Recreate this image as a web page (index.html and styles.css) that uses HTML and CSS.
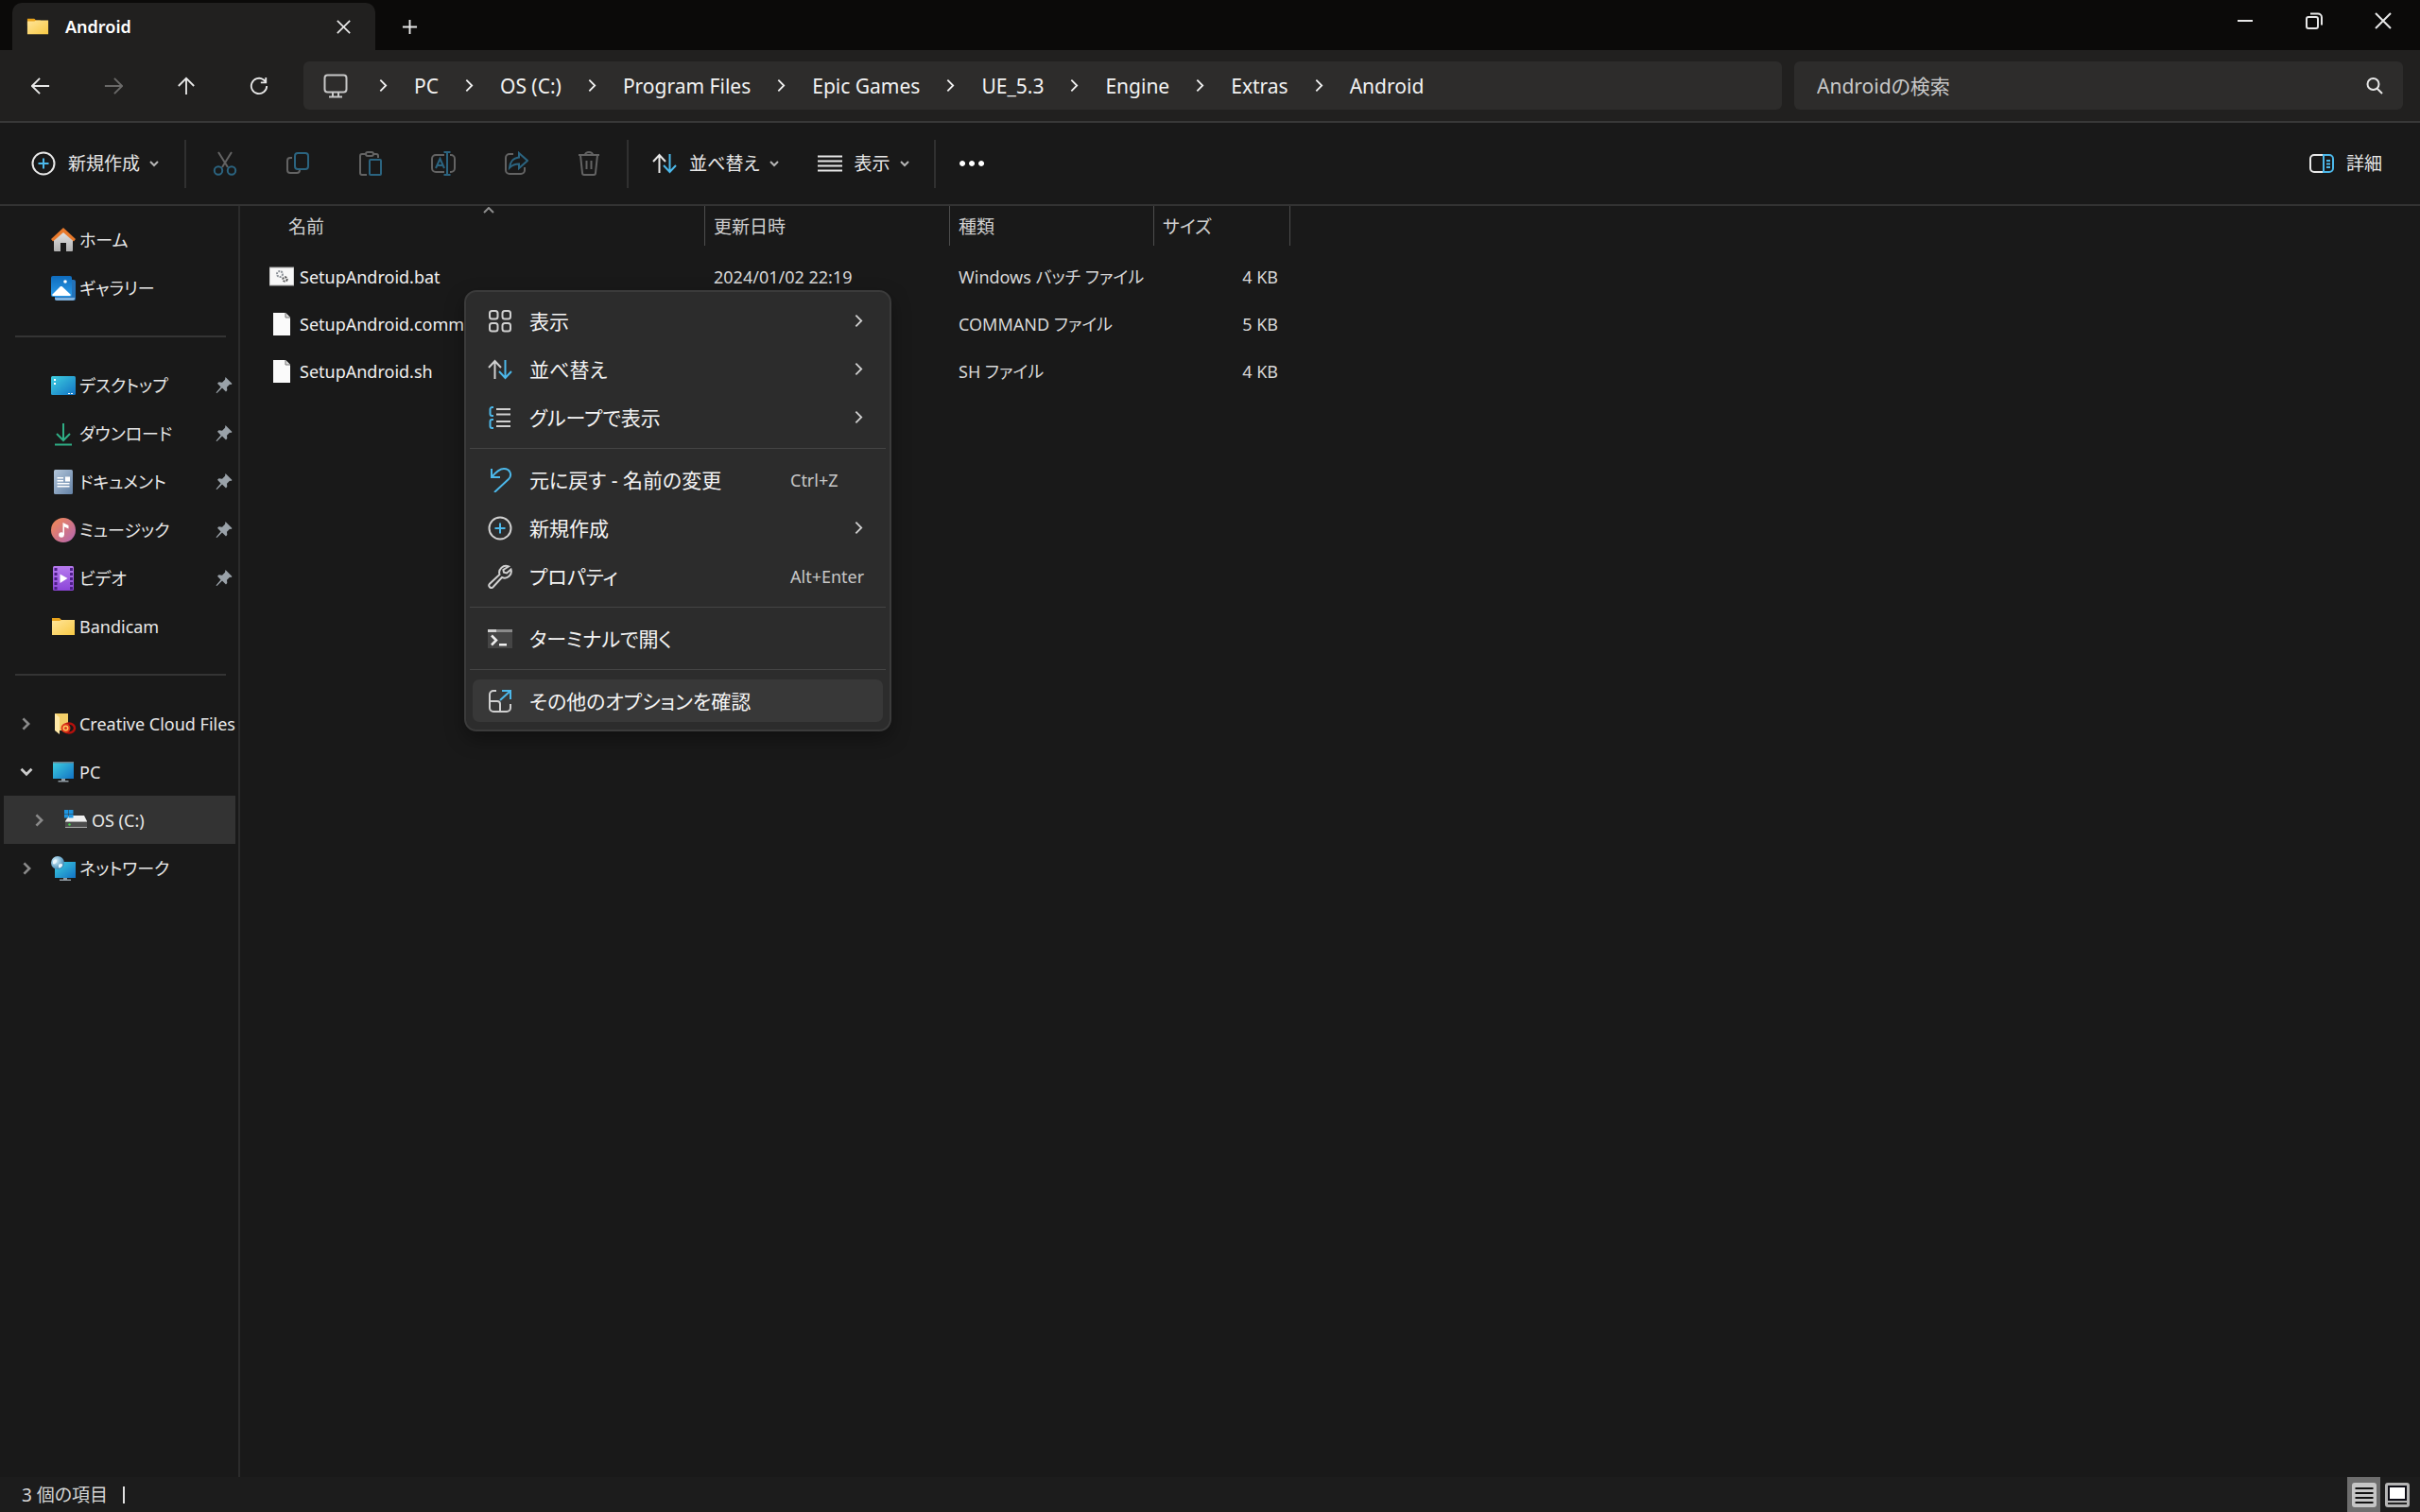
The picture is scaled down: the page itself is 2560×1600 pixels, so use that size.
FILE: index.html
```html
<!DOCTYPE html>
<html lang="ja">
<head>
  <meta charset="UTF-8">
  <meta name="viewport" content="width=device-width, initial-scale=1.0">
  <title>Android</title>
  <link rel="stylesheet" href="styles.css">
</head>
<body>
  <!-- shared icons -->
  <svg class="defs" aria-hidden="true">
    <defs>
      <linearGradient id="g-folder" x1="0" y1="0" x2="1" y2="1"><stop offset="0" stop-color="#ffe59a"/><stop offset="1" stop-color="#f8c944"/></linearGradient>
      <linearGradient id="g-blue" x1="0" y1="0" x2="1" y2="1"><stop offset="0" stop-color="#3fd0e0"/><stop offset="1" stop-color="#1272c4"/></linearGradient>
      <linearGradient id="g-pic" x1="0" y1="0" x2="0" y2="1"><stop offset="0" stop-color="#0f6cbd"/><stop offset="1" stop-color="#2a9ceb"/></linearGradient>
      <linearGradient id="g-doc" x1="0" y1="0" x2="1" y2="1"><stop offset="0" stop-color="#b3c6da"/><stop offset="1" stop-color="#6482a6"/></linearGradient>
      <linearGradient id="g-music" x1="0" y1="0" x2="1" y2="1"><stop offset="0" stop-color="#f58a50"/><stop offset="1" stop-color="#b264b4"/></linearGradient>
      <linearGradient id="g-video" x1="0" y1="0" x2="0" y2="1"><stop offset="0" stop-color="#b77bee"/><stop offset="1" stop-color="#8b45d8"/></linearGradient>
      <linearGradient id="g-home" x1="0" y1="0" x2="0" y2="1"><stop offset="0" stop-color="#e6e6e6"/><stop offset="1" stop-color="#b0b0b0"/></linearGradient>
      <radialGradient id="g-globe" cx=".35" cy=".35" r=".7"><stop offset="0" stop-color="#d8f1fb"/><stop offset="1" stop-color="#3c86b4"/></radialGradient>
    </defs>
    <symbol id="i-close" viewBox="0 0 18 18"><path d="M1 1l16 16M17 1L1 17"/></symbol>
    <symbol id="i-plus" viewBox="0 0 18 18"><path d="M9 1v16M1 9h16"/></symbol>
    <symbol id="i-min" viewBox="0 0 18 18"><path d="M1 9h16"/></symbol>
    <symbol id="i-restore" viewBox="0 0 18 18"><rect x="1" y="5" width="12" height="12" rx="2"/><path d="M5 1.500h8a4 4 0 0 1 4 4v8"/></symbol>
    <symbol id="i-back" viewBox="0 0 22 22"><path d="M21 11H2M10 2l-9 9 9 9"/></symbol>
    <symbol id="i-forward" viewBox="0 0 22 22"><path d="M1 11h19M12 2l9 9-9 9"/></symbol>
    <symbol id="i-up" viewBox="0 0 22 22"><path d="M11 21V2M2 11l9-9 9 9"/></symbol>
    <symbol id="i-refresh" viewBox="0 0 22 22"><path d="M20 11a9 9 0 1 1-4-7.500l3 2.500M19 1v6h-6"/></symbol>
    <symbol id="i-pc" viewBox="0 0 26 26"><rect x="1.500" y="1.500" width="23" height="18" rx="3"/><path d="M10 20v4M16 20v4M6 24.500h14"/></symbol>
    <symbol id="i-right" viewBox="0 0 10 16"><path d="M1.500 1.500L8 8l-6.500 6.500"/></symbol>
    <symbol id="i-down" viewBox="0 0 10 8"><path d="M1 2l4 4 4-4"/></symbol>
    <symbol id="i-caret" viewBox="0 0 12 7"><path d="M1 6l5-5 5 5"/></symbol>
    <symbol id="i-search" viewBox="0 0 18 18"><circle cx="7.500" cy="7" r="6"/><path d="M11.500 11.500L17 17"/></symbol>
    <symbol id="i-new" viewBox="0 0 26 26"><circle cx="13" cy="13" r="11.500"/><path class="accent" d="M13 7.500v11M7.500 13h11"/></symbol>
    <symbol id="i-cut" viewBox="0 0 26 26"><path d="M6 1l10 16M20 1L10 17"/><circle class="accent" cx="6" cy="20.500" r="4.200"/><circle class="accent" cx="20" cy="20.500" r="4.200"/></symbol>
    <symbol id="i-copy" viewBox="0 0 26 26"><path d="M7 7H5a3 3 0 0 0-3 3v10a3 3 0 0 0 3 3h7a3 3 0 0 0 3-3"/><rect class="accent" x="10" y="2" width="14" height="17" rx="3"/></symbol>
    <symbol id="i-paste" viewBox="0 0 26 26"><path d="M8 3H4a2 2 0 0 0-2 2v18a2 2 0 0 0 2 2h5M16 3h3a2 2 0 0 1 2 2v2"/><rect x="8" y="1" width="8" height="4" rx="2"/><rect class="accent" x="12" y="9" width="12" height="16" rx="1"/></symbol>
    <symbol id="i-rename" viewBox="0 0 26 26"><path d="M14 4H5a4 4 0 0 0-4 4v10a4 4 0 0 0 4 4h9M20 4h1a4 4 0 0 1 4 4v10a4 4 0 0 1-4 4h-1"/><path class="accent" d="M5 18L9.500 8 14 18M6.500 15h6M17 1v24M13.500 1h7M13.500 25h7"/></symbol>
    <symbol id="i-share" viewBox="0 0 26 26"><path d="M10 3H6a4 4 0 0 0-4 4v13a4 4 0 0 0 4 4h12a4 4 0 0 0 4-4v-3"/><path class="accent" d="M16 2l9 8-9 8v-4.500c-4 0-7 1-10 4 .5-6 4-10.500 10-11z"/></symbol>
    <symbol id="i-trash" viewBox="0 0 26 26"><path d="M2 4h22M4 4l2 19a2 2 0 0 0 2 2h10a2 2 0 0 0 2-2l2-19M9 4a4 3 0 0 1 8 0M10.500 10v9M15.500 10v9"/></symbol>
    <symbol id="i-sort" viewBox="0 0 26 20"><path d="M7.500 20V1M1 8l6.500-7L14 8"/><path class="accent" d="M18.500 0v19M12 12l6.500 7 6.500-7"/></symbol>
    <symbol id="i-view" viewBox="0 0 26 18"><path d="M0 1.500h26M0 6.500h26M0 11.500h26M0 16.500h26"/></symbol>
    <symbol id="i-more" viewBox="0 0 26 8"><path class="solid" d="M3 1a3 3 0 1 0 .1 0zM13 1a3 3 0 1 0 .1 0zM23 1a3 3 0 1 0 .1 0z"/></symbol>
    <symbol id="i-details" viewBox="0 0 26 20"><path d="M15 1H5a4 4 0 0 0-4 4v10a4 4 0 0 0 4 4h10"/><path class="accent" d="M15 1h6a4 4 0 0 1 4 4v10a4 4 0 0 1-4 4h-6zM18 7h4M18 10.500h4M18 14h4"/></symbol>
    <symbol id="i-grid" viewBox="0 0 26 26"><rect x="2" y="2" width="8.500" height="8.500" rx="2.500"/><rect x="15.500" y="2" width="8.500" height="8.500" rx="2.500"/><rect x="2" y="15" width="8.500" height="8.500" rx="2.500"/><rect x="15.500" y="15" width="8.500" height="8.500" rx="2.500"/></symbol>
    <symbol id="i-group" viewBox="0 0 26 26"><path d="M9 4h15M9 9.500h15M9 17h15M9 22h15"/><path class="accent" d="M6 2H4.500A2 2 0 0 0 2.500 4v5a2 2 0 0 0 2 2H6M6 15H4.500a2 2 0 0 0-2 2v5a2 2 0 0 0 2 2H6"/></symbol>
    <symbol id="i-undo" viewBox="0 0 26 26"><path class="accent" d="M4 1v9h9M4 10C9 4 13 1 17 1c7 0 9 7 5 11L7 26"/></symbol>
    <symbol id="i-wrench" viewBox="0 0 26 26"><path d="M22 2.500a7 7 0 0 0-9.500 8.500L1.800 21a2.500 2.500 0 0 0 3.500 3.500L15 14a7 7 0 0 0 9.500-8.500l-4.500 4-3-.8-.6-2.700z"/></symbol>
    <symbol id="i-more-options" viewBox="0 0 26 26"><path d="M9 2H6a4 4 0 0 0-4 4v14a4 4 0 0 0 4 4h14a4 4 0 0 0 4-4v-4M2 13h8a3 3 0 0 1 3 3v8"/><path class="accent" d="M13 12L24 2M15 2h9v9"/></symbol>
    <symbol id="i-pin" viewBox="0 0 18 18"><path class="solid" d="M10.500 0L17.500 7l-1 1-1.500-.3-3 3 .3 3.300-1.300 1.500-4-4L1.500 17 .5 16.500 5.500 10.500 2 6.800l1.500-1.500 3.500.4 3-3z"/></symbol>
    <symbol id="i-folder" viewBox="0 0 26 20"><path d="M1 1h8l2 2h5v6H1z" fill="#e8a31c" stroke="none"/><path d="M1 4h8l2-1h14v16H1z" fill="url(#g-folder)" stroke="none"/></symbol>
    <symbol id="i-file" viewBox="0 0 26 26"><path d="M4 1h13l5 5v19H4z" fill="#fafafa" stroke="none"/><path d="M17 1v5h5" fill="#ddd" stroke="#777" stroke-width="1"/></symbol>
    <symbol id="i-bat" viewBox="0 0 26 26"><path d="M0 3h26v19H0z" fill="#f7f7f7" stroke="#aaa" stroke-width="1"/><circle cx="11" cy="10" r="3" stroke="#8d9298" stroke-width="2" stroke-dasharray="2 1"/><circle cx="16.500" cy="15.500" r="2.200" stroke="#555" stroke-width="2" stroke-dasharray="2 1"/></symbol>
  </svg>

  <header class="titlebar">
    <div class="tab">
      <svg class="tab-folder"><use href="#i-folder"/></svg>
      <span class="tab-title">Android</span>
      <button class="icon-btn" aria-label="タブを閉じる"><svg class="ic-15"><use href="#i-close"/></svg></button>
    </div>
    <button class="icon-btn new-tab" aria-label="新しいタブ"><svg class="ic-17"><use href="#i-plus"/></svg></button>
    <div class="window-controls">
      <button class="icon-btn" aria-label="最小化"><svg class="ic-18"><use href="#i-min"/></svg></button>
      <button class="icon-btn" aria-label="元に戻す"><svg class="ic-18"><use href="#i-restore"/></svg></button>
      <button class="icon-btn" aria-label="閉じる"><svg class="ic-18"><use href="#i-close"/></svg></button>
    </div>
  </header>

  <div class="navbar">
    <div class="nav-buttons">
      <button class="icon-btn" aria-label="戻る"><svg class="ic-20"><use href="#i-back"/></svg></button>
      <button class="icon-btn" aria-label="進む" disabled><svg class="ic-20"><use href="#i-forward"/></svg></button>
      <button class="icon-btn" aria-label="上へ"><svg class="ic-20"><use href="#i-up"/></svg></button>
      <button class="icon-btn" aria-label="更新"><svg class="ic-20"><use href="#i-refresh"/></svg></button>
    </div>
    <nav class="address">
      <svg class="address-pc"><use href="#i-pc"/></svg>
      <svg class="chev"><use href="#i-right"/></svg>
      <a href="#">PC</a>
      <svg class="chev"><use href="#i-right"/></svg>
      <a href="#">OS (C:)</a>
      <svg class="chev"><use href="#i-right"/></svg>
      <a href="#">Program Files</a>
      <svg class="chev"><use href="#i-right"/></svg>
      <a href="#">Epic Games</a>
      <svg class="chev"><use href="#i-right"/></svg>
      <a href="#">UE_5.3</a>
      <svg class="chev"><use href="#i-right"/></svg>
      <a href="#">Engine</a>
      <svg class="chev"><use href="#i-right"/></svg>
      <a href="#">Extras</a>
      <svg class="chev"><use href="#i-right"/></svg>
      <a href="#">Android</a>
    </nav>
    <label class="search">
      <input type="text" placeholder="Androidの検索" aria-label="Androidの検索">
      <svg class="ic-18"><use href="#i-search"/></svg>
    </label>
  </div>

  <div class="toolbar">
    <button class="tool"><svg class="ic-26"><use href="#i-new"/></svg><span>新規作成</span><svg class="drop"><use href="#i-down"/></svg></button>
    <div class="tool-group">
      <button class="icon-btn" aria-label="切り取り" disabled><svg class="ic-26"><use href="#i-cut"/></svg></button>
      <button class="icon-btn" aria-label="コピー" disabled><svg class="ic-26"><use href="#i-copy"/></svg></button>
      <button class="icon-btn" aria-label="貼り付け" disabled><svg class="ic-26"><use href="#i-paste"/></svg></button>
      <button class="icon-btn" aria-label="名前の変更" disabled><svg class="ic-26"><use href="#i-rename"/></svg></button>
      <button class="icon-btn" aria-label="共有" disabled><svg class="ic-26"><use href="#i-share"/></svg></button>
      <button class="icon-btn" aria-label="削除" disabled><svg class="ic-26"><use href="#i-trash"/></svg></button>
    </div>
    <div class="tool-group views">
      <button class="tool"><svg class="ic-26"><use href="#i-sort"/></svg><span>並べ替え</span><svg class="drop"><use href="#i-down"/></svg></button>
      <button class="tool"><svg class="ic-26"><use href="#i-view"/></svg><span>表示</span><svg class="drop"><use href="#i-down"/></svg></button>
    </div>
    <button class="icon-btn more" aria-label="もっと見る"><svg class="ic-26"><use href="#i-more"/></svg></button>
    <button class="tool details"><svg class="ic-26"><use href="#i-details"/></svg><span>詳細</span></button>
  </div>

  <div class="body">
    <aside class="sidebar">
      <a class="item" href="#"><span class="twist"></span>
        <svg class="ic-26 art" viewBox="0 0 26 26"><path d="M3 12L13 3l10 9v12a1 1 0 0 1-1 1h-6v-9h-6v9H4a1 1 0 0 1-1-1z" fill="url(#g-home)"/><path d="M0 12L13 0l13 12-2 2.500L13 5 2 14.500z" fill="#e8792b"/></svg>
        <span class="name">ホーム</span></a>
      <a class="item" href="#"><span class="twist"></span>
        <svg class="ic-26 art" viewBox="0 0 26 26"><rect x="4" y="4" width="22" height="22" rx="2" fill="#2472b8"/><path d="M4 23h21v1a2 2 0 0 1-2 2H6a2 2 0 0 1-2-2z" fill="#7fb2de"/><rect width="22" height="22" rx="2" fill="url(#g-pic)"/><path d="M1 20l9-9 1.500 0L21 20a2 2 0 0 1-1 1H2a2 2 0 0 1-1-1z" fill="#fff"/><circle cx="15" cy="6" r="1.800" fill="#fff"/></svg>
        <span class="name">ギャラリー</span></a>
      <hr>
      <a class="item" href="#"><span class="twist"></span>
        <svg class="ic-26 art" viewBox="0 0 26 20"><rect width="26" height="20" rx="1.500" fill="url(#g-blue)"/><path d="M3 3h2v2H3zM3 7h2v2H3z" fill="#fff"/><path d="M18 18h2v1h-2zM21 18h2v1h-2z" fill="#fff"/></svg>
        <span class="name">デスクトップ</span><svg class="pin"><use href="#i-pin"/></svg></a>
      <a class="item" href="#"><span class="twist"></span>
        <svg class="ic-26 download" viewBox="0 0 26 26"><path d="M13 2v18M6 13l7 7 7-7M4 24.500h18"/></svg>
        <span class="name">ダウンロード</span><svg class="pin"><use href="#i-pin"/></svg></a>
      <a class="item" href="#"><span class="twist"></span>
        <svg class="ic-26 art" viewBox="0 0 26 26"><rect x="3" width="20" height="26" rx="1.500" fill="url(#g-doc)"/><path d="M6.500 8H13v1.600H6.500zM6.500 11H13v1.600H6.500zM15 7.500h5v5h-5zM6.500 14h13v1.600h-13zM6.500 17h13v1.600h-13z" fill="#fff"/></svg>
        <span class="name">ドキュメント</span><svg class="pin"><use href="#i-pin"/></svg></a>
      <a class="item" href="#"><span class="twist"></span>
        <svg class="ic-26 art" viewBox="0 0 26 26"><circle cx="13" cy="13" r="13" fill="url(#g-music)"/><circle cx="11" cy="18" r="2.800" fill="#fff"/><path d="M12.500 18V5l6 3v3.500l-4.500-2V18z" fill="#fff"/></svg>
        <span class="name">ミュージック</span><svg class="pin"><use href="#i-pin"/></svg></a>
      <a class="item" href="#"><span class="twist"></span>
        <svg class="ic-26 art" viewBox="0 0 26 26"><rect x="2" width="22" height="26" rx="1.500" fill="url(#g-video)"/><path d="M5 2v23M21.500 2v23" stroke="#4d1f87" stroke-width="3" stroke-dasharray="3 2"/><path d="M9.500 8.500l8 4.500-8 5z" fill="#fff"/></svg>
        <span class="name">ビデオ</span><svg class="pin"><use href="#i-pin"/></svg></a>
      <a class="item" href="#"><span class="twist"></span>
        <svg class="ic-26"><use href="#i-folder"/></svg>
        <span class="name">Bandicam</span></a>
      <hr>
      <a class="item" href="#"><span class="twist"><svg><use href="#i-right"/></svg></span>
        <svg class="ic-26 art" viewBox="0 0 26 26"><path d="M4 2h14v18H8z" fill="#f3cf69"/><path d="M4 2l5 4v18l-5-4z" fill="#ffe9a8"/><ellipse cx="19" cy="17.500" rx="6" ry="5" fill="none" stroke="#b3100c" stroke-width="2.500"/><circle cx="15.500" cy="17.500" r="4" fill="#ffc65c" stroke="#dd3a1c" stroke-width="2"/><circle cx="15.500" cy="17.500" r="1.500" fill="#dd3a1c"/></svg>
        <span class="name">Creative Cloud Files</span></a>
      <a class="item" href="#"><span class="twist open"><svg><use href="#i-down"/></svg></span>
        <svg class="ic-26 art" viewBox="0 0 26 24"><path d="M2 1h22v18H2z" fill="url(#g-blue)"/><path d="M2 1h22v1.500H2z" fill="#6c7e88"/><path d="M11 19h4v2h3.500v1.500h-11V21H11z" fill="#8f9aa2"/></svg>
        <span class="name">PC</span></a>
      <a class="item nested selected" href="#"><span class="twist"><svg><use href="#i-right"/></svg></span>
        <svg class="ic-26 art" viewBox="0 0 26 26"><path d="M6 8h16l3 6H2z" fill="#f0f0f0"/><path d="M2 14h23v7H2z" fill="#4c4c4c"/><path d="M2 14h23v1H2zM2 20h23v1H2z" fill="#a9a9a9"/><circle cx="6.500" cy="17.500" r="1.200" fill="#45d34a"/><path d="M1 2h4.500v4H1zM6 2h4.500v4H6zM1 6.500h4.500v4H1zM6 6.500h4.500v4H6z" fill="#1e95e0"/></svg>
        <span class="name">OS (C:)</span></a>
      <a class="item" href="#"><span class="twist"><svg><use href="#i-right"/></svg></span>
        <svg class="ic-26 art" viewBox="0 0 26 26"><path d="M4 6h22v17H4z" fill="url(#g-blue)"/><path d="M13 23h4v1.500h4V26H9v-1.500h4z" fill="#8f9aa2"/><circle cx="7" cy="7" r="7" fill="url(#g-globe)"/><path d="M2 5c3-3 5-1 4 1S3 9 2 8zM8 9c2-2 5-1 4 1s-3 3-4 2z" fill="#eaf7fd"/></svg>
        <span class="name">ネットワーク</span></a>
    </aside>

    <main class="content">
      <table class="files">
        <thead>
          <tr>
            <th class="col-name"><span>名前</span><svg class="caret"><use href="#i-caret"/></svg></th>
            <th class="col-date"><span>更新日時</span></th>
            <th class="col-type"><span>種類</span></th>
            <th class="col-size"><span>サイズ</span></th>
          </tr>
        </thead>
        <tbody>
          <tr>
            <td><div class="file"><svg class="ic-26"><use href="#i-bat"/></svg>SetupAndroid.bat</div></td>
            <td>2024/01/02 22:19</td>
            <td>Windows バッチ ファイル</td>
            <td class="size">4 KB</td>
          </tr>
          <tr>
            <td><div class="file"><svg class="ic-26"><use href="#i-file"/></svg>SetupAndroid.command</div></td>
            <td>2024/01/02 22:19</td>
            <td>COMMAND ファイル</td>
            <td class="size">5 KB</td>
          </tr>
          <tr>
            <td><div class="file"><svg class="ic-26"><use href="#i-file"/></svg>SetupAndroid.sh</div></td>
            <td>2024/01/02 22:19</td>
            <td>SH ファイル</td>
            <td class="size">4 KB</td>
          </tr>
        </tbody>
      </table>

      <div class="context-menu" role="menu">
        <button role="menuitem"><svg class="ic-26"><use href="#i-grid"/></svg><span>表示</span><svg class="chev"><use href="#i-right"/></svg></button>
        <button role="menuitem"><svg class="ic-26"><use href="#i-sort"/></svg><span>並べ替え</span><svg class="chev"><use href="#i-right"/></svg></button>
        <button role="menuitem"><svg class="ic-26"><use href="#i-group"/></svg><span>グループで表示</span><svg class="chev"><use href="#i-right"/></svg></button>
        <hr>
        <button role="menuitem"><svg class="ic-26"><use href="#i-undo"/></svg><span>元に戻す - 名前の変更</span><kbd>Ctrl+Z</kbd></button>
        <button role="menuitem"><svg class="ic-26"><use href="#i-new"/></svg><span>新規作成</span><svg class="chev"><use href="#i-right"/></svg></button>
        <button role="menuitem"><svg class="ic-26"><use href="#i-wrench"/></svg><span>プロパティ</span><kbd>Alt+Enter</kbd></button>
        <hr>
        <button role="menuitem"><svg class="ic-26 art" viewBox="0 0 26 20"><path d="M0 0h26v20H0z" fill="#454545"/><path d="M0 0h26v3H0z" fill="#8a8a8a"/><path d="M0 0h9v3H0z" fill="#d0d0d0"/><path d="M4 6.500l5 5-5 5" fill="none" stroke="#eee" stroke-width="2.500"/><path d="M12 15h8v2.500h-8z" fill="#eee"/></svg><span>ターミナルで開く</span></button>
        <hr>
        <button role="menuitem" class="hover"><svg class="ic-26"><use href="#i-more-options"/></svg><span>その他のオプションを確認</span></button>
      </div>
    </main>
  </div>

  <footer class="statusbar">
    <span class="count">3 個の項目</span>
    <div class="view-switch">
      <button class="active" aria-label="詳細表示"><svg class="ic-26 art" viewBox="0 0 26 26"><rect width="26" height="26" rx="3" fill="#c6c6c6"/><path d="M3.500 5h19v2h-19zM3.500 10h19v2h-19zM3.500 15h19v2h-19zM3.500 20h19v2h-19z" fill="#111"/></svg></button>
      <button aria-label="大アイコン表示"><svg class="ic-26 art" viewBox="0 0 26 26"><rect width="26" height="26" rx="3" fill="#b4b4b4"/><path d="M3 3h20v16H3z" fill="#0c0c14"/><path d="M5 5h16v12H5z" fill="#fff"/><path d="M3 21h20v2H3z" fill="#222"/></svg></button>
    </div>
  </footer>
</body>
</html>
```

FILE: styles.css
```css
* {
  box-sizing: border-box;
}

body {
  --accent: #4cb8ea;
  margin: 0;
  height: 100vh;
  display: flex;
  flex-direction: column;
  background-color: #191919;
  color: #e8e8e8;
  font-family: "Noto Sans", "Noto Sans CJK JP", sans-serif;
  font-size: 18px;
  line-height: 24px;
  font-feature-settings: "palt";
  overflow: hidden;
}

button,
input {
  font: inherit;
  font-feature-settings: inherit;
  color: inherit;
  background: none;
  border: none;
  padding: 0;
}

a {
  color: inherit;
  text-decoration: none;
}

svg {
  display: block;
  flex: none;
  overflow: visible;
  fill: none;
  stroke: currentColor;
  stroke-width: 2;
}

.defs {
  position: absolute;
  width: 0;
  height: 0;
}

.accent {
  stroke: var(--accent);
}

.solid {
  fill: currentColor;
  stroke: none;
}

.art {
  stroke: none;
}

.download {
  stroke: #2fae85;
}

.ic-15 { width: 15px; height: 15px; }
.ic-17 { width: 17px; height: 17px; }
.ic-18 { width: 18px; height: 18px; }
.ic-20 { width: 20px; height: 20px; }
.ic-26 { width: 26px; height: 26px; }

.chev {
  width: 9px;
  height: 15px;
}

.drop {
  width: 10px;
  height: 8px;
}

.icon-btn {
  display: flex;
  align-items: center;
  justify-content: center;
}

/* title bar */
.titlebar {
  display: flex;
  height: 53px;
  background-color: #0b0a09;
}

.tab {
  display: flex;
  align-items: center;
  width: 384px;
  margin: 3px 0 0 13px;
  padding: 0 26px 0 15px;
  background-color: #21201f;
  border-radius: 10px 10px 0 0;
}

.tab-folder {
  width: 24px;
  height: 20px;
}

.tab-title {
  flex: 1;
  padding-left: 17px;
  font-weight: 600;
  color: #fff;
}

.new-tab {
  width: 72px;
  padding-top: 4px;
}

.window-controls {
  display: flex;
  margin-left: auto;
  padding-right: 3px;
}

.window-controls button {
  width: 73px;
  height: 43px;
}

/* navigation */
.navbar {
  display: flex;
  align-items: center;
  gap: 13px;
  height: 77px;
  padding: 0 18px 0 4px;
  background-color: #21201f;
  border-bottom: 2px solid #383838;
}

.nav-buttons {
  display: flex;
  margin-right: -4px;
}

.nav-buttons button {
  width: 77px;
  height: 51px;
}

.nav-buttons button:disabled {
  color: #6a6968;
}

.address,
.search {
  display: flex;
  align-items: center;
  height: 51px;
  background-color: #2d2c2b;
  border-radius: 6px;
  font-size: 21px;
  min-width: 0;
}

.address {
  flex: 17 1 0;
  gap: 28px;
  color: #f2f2f2;
}

.address a {
  white-space: nowrap;
}

.address-pc {
  width: 26px;
  height: 26px;
  margin: 0 5px 0 21px;
  color: #c8c8c8;
}

.search {
  flex: 7 1 0;
}

.search input {
  flex: 1;
  min-width: 0;
  padding-left: 24px;
  outline: none;
}

.search svg {
  margin-right: 21px;
}

.search input::placeholder {
  color: #c8c8c8;
  opacity: 1;
}

/* command bar */
.toolbar {
  display: flex;
  align-items: center;
  height: 88px;
  padding: 0 33px;
  border-bottom: 2px solid #333;
  font-size: 19px;
}

.tool {
  display: flex;
  align-items: center;
  gap: 13px;
}

.tool .drop {
  color: #b5b5b5;
  margin-left: -3px;
}

.tool-group {
  display: flex;
  height: 51px;
  margin-left: 27px;
  border-left: 2px solid #303030;
  border-right: 2px solid #303030;
  padding: 0 2px;
}

.tool-group .icon-btn {
  width: 77px;
}

.tool-group .icon-btn:disabled {
  --accent: #2b6480;
  color: #636363;
}

.views {
  gap: 41px;
  margin-left: 0;
  border-left: none;
  padding: 0 26px 0 25px;
}

.more {
  margin-left: 25px;
  color: #fff;
}

.details {
  margin-left: auto;
  padding-right: 7px;
}

/* panes */
.body {
  flex: 1;
  display: flex;
  min-height: 0;
}

.sidebar {
  width: 254px;
  flex: none;
  padding: 10px 3px 0 4px;
  border-right: 2px solid #2b2b2b;
  overflow: hidden;
}

.sidebar hr {
  height: 2px;
  margin: 25px 10px 25px 12px;
  border: none;
  background-color: #343434;
}

.item {
  display: flex;
  align-items: center;
  height: 51px;
  padding-left: 14px;
  overflow: hidden;
  white-space: nowrap;
}

.nested {
  padding-left: 27px;
}

.selected {
  background-color: #333;
}

.twist {
  display: flex;
  justify-content: center;
  width: 20px;
  margin-right: 16px;
  color: #8a8a8a;
}

.twist svg {
  width: 9px;
  height: 14px;
  stroke-width: 3;
}

.twist.open svg {
  width: 14px;
  height: 11px;
  color: #ccc;
  stroke-width: 2;
}

.name {
  flex: 1;
  padding-left: 4px;
}

.pin {
  width: 18px;
  height: 18px;
  margin-right: 3px;
  color: #9aa2a9;
}

.content {
  flex: 1;
  position: relative;
  min-width: 0;
}

.files {
  width: 1080px;
  margin-left: 31px;
  border-collapse: collapse;
  table-layout: fixed;
  white-space: nowrap;
}

.files tr {
  height: 50px;
}

.files th {
  position: relative;
  padding: 0;
  vertical-align: top;
  text-align: left;
  font-size: 19px;
  font-weight: 400;
  color: #cfcfcf;
}

.files th span {
  display: block;
  height: 42px;
  padding-left: 9px;
  line-height: 44px;
  border-right: 1px solid #4d4d4d;
}

.files th.col-name span {
  padding-left: 20px;
}

.col-name { width: 461px; }
.col-date { width: 259px; }
.col-type { width: 216px; }
.col-size { width: 144px; }

.caret {
  position: absolute;
  top: 1px;
  left: 49%;
  width: 12px;
  height: 7px;
  color: #8d8d8d;
}

.files td {
  padding: 0 0 0 9px;
  color: #d8d8d8;
}

.files td:first-child {
  padding-left: 0;
  color: #f0f0f0;
}

.files td.size {
  padding-right: 13px;
  text-align: right;
}

.file {
  display: flex;
  align-items: center;
  gap: 6px;
}

/* right-click menu */
.context-menu {
  position: absolute;
  top: 89px;
  left: 237px;
  display: flex;
  flex-direction: column;
  width: 452px;
  padding: 5px 7px;
  background-color: #2c2c2c;
  border: 2px solid #3b3b3b;
  border-radius: 13px;
  box-shadow: 0 8px 20px rgba(0, 0, 0, 0.35);
}

.context-menu button {
  display: flex;
  align-items: center;
  height: 45px;
  margin: 3px 0;
  padding: 0 21px 0 16px;
  border-radius: 7px;
  font-size: 21px;
  color: #f4f4f4;
  text-align: left;
}

.context-menu button.hover {
  background-color: #383838;
}

.context-menu svg {
  color: #d0d0d0;
}

.context-menu span {
  flex: 1;
  padding-left: 18px;
  white-space: nowrap;
}

.context-menu kbd {
  width: 77px;
  font-family: inherit;
  font-size: 18px;
  color: #c8c8c8;
}

.context-menu hr {
  height: 1px;
  margin: 7px -3px;
  border: none;
  background-color: #454545;
}

/* status bar */
.statusbar {
  display: flex;
  align-items: center;
  height: 37px;
  padding: 0 7px 0 23px;
  background-color: #1c1c1c;
  color: #d6d6d6;
}

.count {
  height: 18px;
  line-height: 18px;
  font-size: 19px;
  padding-right: 16px;
  border-right: 2px solid #e0e0e0;
}

.view-switch {
  display: flex;
  height: 100%;
  margin-left: auto;
}

.view-switch button {
  display: flex;
  align-items: center;
  justify-content: center;
  width: 35px;
}

.view-switch .active {
  background-color: #6e6e6e;
}
```
